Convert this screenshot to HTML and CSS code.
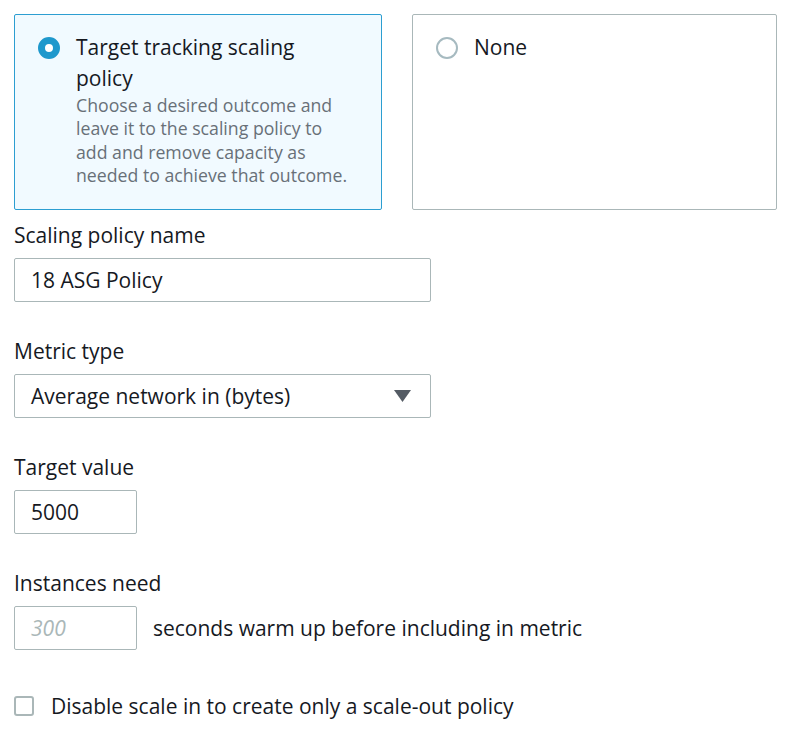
FILE: index.html
```html
<!DOCTYPE html>
<html lang="en">
<head>
<meta charset="utf-8">
<title>Scaling policies</title>
<link rel="stylesheet" href="styles.css">
</head>
<body>
<div class="page">
  <div class="cards">
    <div class="card card-selected">
      <span class="radio radio-on"></span>
      <div class="card-body">
        <div class="card-title">Target tracking scaling policy</div>
        <div class="card-desc">Choose a desired outcome and leave it to the scaling policy to add and remove capacity as needed to achieve that outcome.</div>
      </div>
    </div>
    <div class="card">
      <span class="radio"></span>
      <div class="card-body">
        <div class="card-title">None</div>
      </div>
    </div>
  </div>

  <div class="field field-first">
    <div class="label">Scaling policy name</div>
    <div class="input input-wide">18 ASG Policy</div>
  </div>

  <div class="field">
    <div class="label">Metric type</div>
    <div class="input input-wide select">
      <span>Average network in (bytes)</span>
      <svg class="caret" width="17" height="12" viewBox="0 0 17 12"><path d="M0 0 H17 L8.5 12 Z" fill="#545b64"/></svg>
    </div>
  </div>

  <div class="field">
    <div class="label">Target value</div>
    <div class="input input-small">5000</div>
  </div>

  <div class="field">
    <div class="label">Instances need</div>
    <div class="inline-row">
      <div class="input input-small placeholder">300</div>
      <span class="inline-text">seconds warm up before including in metric</span>
    </div>
  </div>

  <div class="check-row">
    <span class="checkbox"></span>
    <span class="check-text">Disable scale in to create only a scale-out policy</span>
  </div>
</div>
</body>
</html>
```

FILE: styles.css
```css
* { box-sizing: border-box; }
html, body { margin: 0; padding: 0; background: #ffffff; }
body {
  font-family: "Open Sans", "Liberation Sans", sans-serif;
  color: #16191f;
}
.page {
  width: 791px;
  padding: 14px 15px 0 14px;
}
.cards {
  display: grid;
  grid-template-columns: 368px 365px;
  column-gap: 30px;
}
.card {
  height: 196px;
  border: 1px solid #aab7b8;
  border-radius: 2px;
  background: #ffffff;
  display: flex;
  align-items: flex-start;
  padding: 21px 10px 0 23px;
}
.card-selected {
  border-color: #2c9ed1;
  background: #f1faff;
}
.radio {
  flex: none;
  width: 22px;
  height: 22px;
  border-radius: 50%;
  border: 2px solid #a6bac0;
  background: #ffffff;
  margin-top: 1px;
}
.radio-on {
  border: 7px solid #1e98cc;
}
.card-body {
  margin-left: 16px;
  width: 278px;
}
.card-title {
  font-size: 21px;
  line-height: 31px;
  margin-top: -4px;
}
.card-desc {
  font-size: 17.7px;
  line-height: 23.4px;
  color: #687078;
}
.field { margin-top: 36px; }
.field-first { margin-top: 12px; }
.label {
  font-size: 21px;
  line-height: 26px;
  margin-bottom: 10px;
}
.input {
  height: 44px;
  border: 1px solid #aab7b8;
  border-radius: 2px;
  padding: 0 16px;
  font-size: 21px;
  display: flex;
  align-items: center;
  background: #ffffff;
}
.input-wide { width: 417px; }
.input-small { width: 123px; }
.select { justify-content: space-between; padding-right: 19px; }
.caret { flex: none; }
.placeholder {
  color: #aab7b8;
  font-style: italic;
}
.inline-row {
  display: flex;
  align-items: center;
}
.inline-text {
  font-size: 21px;
  margin-left: 16px;
}
.check-row {
  display: flex;
  align-items: center;
  height: 26px;
  margin-top: 43px;
}
.checkbox {
  width: 20px;
  height: 20px;
  border: 2px solid #aab7b8;
  border-radius: 3px;
  background: #fff;
  flex: none;
}
.check-text {
  font-size: 21px;
  line-height: 26px;
  margin-left: 17px;
}
```
